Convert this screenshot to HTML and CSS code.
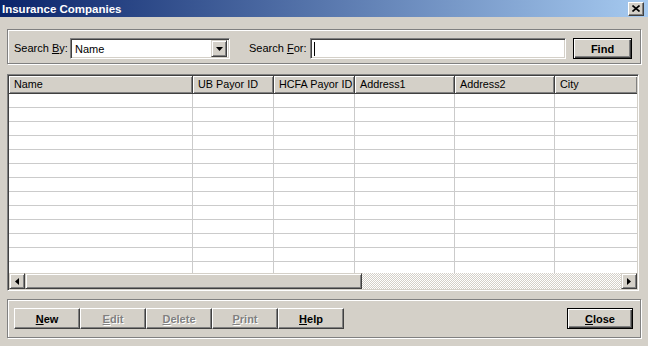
FILE: index.html
```html
<!DOCTYPE html>
<html>
  <head>
    <meta http-equiv="Content-Type" content="text/html; charset=utf-8"/>
    <link rel="stylesheet" href="styles.css">
  </head>
  <body>
    <div class="window">
      <div class="titlebar">
        <span class="title">Insurance Companies</span>
        <span class="title-close">
          <svg width="8" height="7" viewBox="0 0 8 7"><path d="M0.5 0.5 L7.5 6.5 M7.5 0.5 L0.5 6.5" stroke="#000" stroke-width="1.6" fill="none"/></svg>
        </span>
      </div>

      <div class="group search">
        <label class="lbl by">Search <u>B</u>y:</label>
        <div class="sunken combo">
          <span class="combo-text">Name</span>
          <span class="raised combo-btn">
            <svg width="7" height="4" viewBox="0 0 7 4"><path d="M0 0 H7 L3.5 4 Z" fill="#000"/></svg>
          </span>
        </div>
        <label class="lbl for">Search <u>F</u>or:</label>
        <div class="sunken field"><span class="caret"></span></div>
        <button class="btn default find">Find</button>
      </div>

      <div class="grid">
        <div class="grid-head">
          <div class="hc c-name">Name</div>
          <div class="hc c-id">UB Payor ID</div>
          <div class="hc c-id">HCFA Payor ID</div>
          <div class="hc c-addr">Address1</div>
          <div class="hc c-addr">Address2</div>
          <div class="hc c-city">City</div>
        </div>
        <div class="grid-body">
          <div class="col c-name"></div>
          <div class="col c-id"></div>
          <div class="col c-id"></div>
          <div class="col c-addr"></div>
          <div class="col c-addr"></div>
          <div class="col c-city"></div>
        </div>
        <div class="hscroll">
          <span class="raised sb-btn">
            <svg width="4" height="7" viewBox="0 0 4 7"><path d="M4 0 V7 L0 3.5 Z" fill="#000"/></svg>
          </span>
          <span class="raised sb-thumb"></span>
          <span class="sb-track"></span>
          <span class="raised sb-btn">
            <svg width="4" height="7" viewBox="0 0 4 7"><path d="M0 0 V7 L4 3.5 Z" fill="#000"/></svg>
          </span>
        </div>
      </div>

      <div class="group actions">
        <div class="strip">
          <button class="btn"><u>N</u>ew</button>
          <button class="btn off"><u>E</u>dit</button>
          <button class="btn off"><u>D</u>elete</button>
          <button class="btn off"><u>P</u>rint</button>
          <button class="btn"><u>H</u>elp</button>
        </div>
        <button class="btn default close"><u>C</u>lose</button>
      </div>
    </div>
  </body>
</html>
```

FILE: styles.css
```css
body {
  margin: 0px;
  padding: 0px;
  background: #d4d0c8;
  font-family: "Liberation Sans", Arial, sans-serif;
  font-size: 11px;
  color: #000000;
}

.window {
  width: 648px;
  height: 346px;
  overflow: hidden;
}

/* title bar */

.titlebar {
  height: 17px;
  display: flex;
  align-items: center;
  justify-content: space-between;
  padding: 0px 4px 0px 2px;
  background: linear-gradient(to right, #0a246a, #a6caf0);
}

.title {
  color: #ffffff;
  font-weight: bold;
  font-size: 11.5px;
}

.title-close {
  width: 16px;
  height: 14px;
  box-sizing: border-box;
  display: flex;
  align-items: center;
  justify-content: center;
  background: #d4d0c8;
  border: 1px solid;
  border-color: #ffffff #404040 #404040 #ffffff;
  box-shadow: inset -1px -1px #808080;
}

/* 3d helpers */

.raised {
  box-sizing: border-box;
  background: #d4d0c8;
  border: 1px solid;
  border-color: #d4d0c8 #404040 #404040 #d4d0c8;
  box-shadow: inset 1px 1px #ffffff, inset -1px -1px #808080;
}

.sunken {
  box-sizing: border-box;
  background: #ffffff;
  border: 1px solid;
  border-color: #808080 #ffffff #ffffff #808080;
  box-shadow: inset 1px 1px #404040, inset -1px -1px #d4d0c8;
}

/* group boxes */

.group {
  width: 634px;
  margin-left: 7px;
  box-sizing: border-box;
  border: 1px solid #808080;
  box-shadow: inset 1px 1px #ffffff, 1px 1px #ffffff;
  display: flex;
  align-items: flex-start;
}

.search {
  height: 35px;
  margin-top: 12px;
  padding: 8px 0px 0px 6px;
}

.actions {
  height: 39px;
  margin-top: 8px;
  padding: 8px 7px 0px 6px;
}

.lbl {
  height: 21px;
  line-height: 20px;
  white-space: nowrap;
}

.lbl.by {
  width: 56px;
}

.lbl.for {
  width: 61px;
  margin-left: 19px;
}

.combo {
  width: 160px;
  height: 21px;
  display: flex;
  align-items: center;
  padding: 2px;
}

.combo-text {
  flex: 1;
  padding-left: 2px;
  line-height: 16px;
}

.combo-btn {
  width: 16px;
  height: 17px;
  display: flex;
  align-items: center;
  justify-content: center;
}

.field {
  width: 256px;
  height: 21px;
  padding: 3px 0px 0px 3px;
}

.caret {
  display: block;
  width: 1px;
  height: 14px;
  background: #000000;
}

/* buttons */

.btn {
  height: 21px;
  width: 66px;
  margin: 0px;
  padding: 0px;
  box-sizing: border-box;
  background: #d4d0c8;
  font-family: "Liberation Sans", Arial, sans-serif;
  font-size: 11px;
  font-weight: bold;
  color: #000000;
  border: 1px solid;
  border-color: #ffffff #404040 #404040 #ffffff;
  box-shadow: inset -1px -1px #808080;
}

.btn.default {
  border-color: #000000;
  box-shadow: inset 1px 1px #ffffff, inset -1px -1px #404040, inset -2px -2px #808080;
}

.btn.off {
  color: #808080;
  text-shadow: 1px 1px #ffffff;
}

.find {
  width: 59px;
  margin-left: 7px;
}

.strip {
  display: flex;
}

.close {
  margin-left: auto;
}

/* list grid */

.grid {
  width: 632px;
  height: 217px;
  margin: 10px 0px 0px 7px;
  box-sizing: border-box;
  padding: 1px;
  background: #ffffff;
  border: 1px solid;
  border-color: #808080 #ffffff #ffffff #808080;
  box-shadow: inset 1px 1px #404040, inset -1px -1px #d4d0c8;
}

.grid-head {
  height: 18px;
  display: flex;
}

.hc {
  box-sizing: border-box;
  height: 18px;
  line-height: 17px;
  padding-left: 5px;
  font-size: 10.8px;
  white-space: nowrap;
  overflow: hidden;
  background: #d4d0c8;
  border-right: 1px solid #404040;
  border-bottom: 1px solid #404040;
  box-shadow: inset 1px 1px #ffffff, inset -1px -1px #808080;
}

.c-name { width: 184px; }
.c-id { width: 81px; }
.c-addr { width: 100px; }
.c-city { flex: 1; }

.hc.c-city {
  border-right: none;
}

.grid-body {
  height: 179px;
  display: flex;
  background: repeating-linear-gradient(to bottom, transparent 0px, transparent 13px, #cbcbcb 13px, #cbcbcb 14px);
}

.col {
  box-sizing: border-box;
  border-right: 1px solid #cbcbcb;
}

.col.c-city {
  border-right: none;
}

.hscroll {
  height: 16px;
  display: flex;
}

.sb-btn {
  width: 16px;
  height: 16px;
  display: flex;
  align-items: center;
  justify-content: center;
}

.sb-thumb {
  width: 337px;
  height: 16px;
}

.sb-track {
  flex: 1;
  height: 16px;
  background: repeating-conic-gradient(#ffffff 0% 25%, #d4d0c8 0% 50%) 0 0 / 2px 2px;
}
```
